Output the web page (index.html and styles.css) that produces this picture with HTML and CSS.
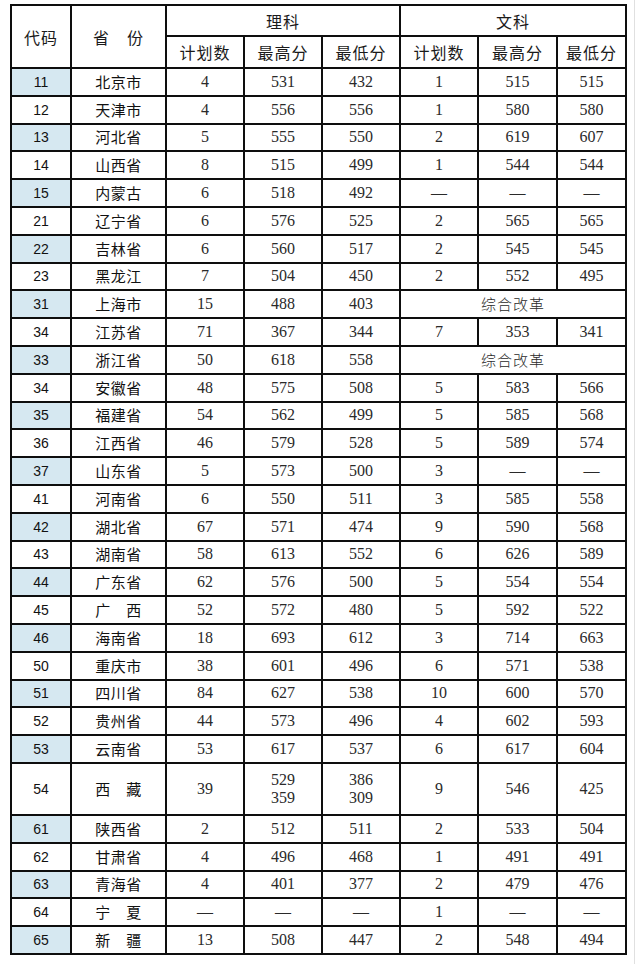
FILE: index.html
```html
<!DOCTYPE html>
<html lang="zh">
<head>
<meta charset="utf-8">
<title>录取分数</title>
<link rel="stylesheet" href="styles.css">
</head>
<body>
<div class="page">
<table class="score">
<colgroup>
<col class="c-code"><col class="c-prov"><col class="c-n"><col class="c-n"><col class="c-n"><col class="c-n"><col class="c-n2"><col class="c-last">
</colgroup>
<thead>
<tr class="h1">
<th rowspan="2">代码</th><th rowspan="2">省　份</th><th colspan="3">理科</th><th colspan="3">文科</th>
</tr>
<tr class="h2">
<th>计划数</th><th>最高分</th><th>最低分</th><th>计划数</th><th>最高分</th><th>最低分</th>
</tr>
</thead>
<tbody>
<tr><td class="code blue">11</td><td class="prov">北京市</td><td>4</td><td>531</td><td>432</td><td>1</td><td>515</td><td>515</td></tr>
<tr><td class="code">12</td><td class="prov">天津市</td><td>4</td><td>556</td><td>556</td><td>1</td><td>580</td><td>580</td></tr>
<tr><td class="code blue">13</td><td class="prov">河北省</td><td>5</td><td>555</td><td>550</td><td>2</td><td>619</td><td>607</td></tr>
<tr><td class="code">14</td><td class="prov">山西省</td><td>8</td><td>515</td><td>499</td><td>1</td><td>544</td><td>544</td></tr>
<tr><td class="code blue">15</td><td class="prov">内蒙古</td><td>6</td><td>518</td><td>492</td><td>—</td><td>—</td><td>—</td></tr>
<tr><td class="code">21</td><td class="prov">辽宁省</td><td>6</td><td>576</td><td>525</td><td>2</td><td>565</td><td>565</td></tr>
<tr><td class="code blue">22</td><td class="prov">吉林省</td><td>6</td><td>560</td><td>517</td><td>2</td><td>545</td><td>545</td></tr>
<tr><td class="code">23</td><td class="prov">黑龙江</td><td>7</td><td>504</td><td>450</td><td>2</td><td>552</td><td>495</td></tr>
<tr><td class="code blue">31</td><td class="prov">上海市</td><td>15</td><td>488</td><td>403</td><td colspan="3" class="reform">综合改革</td></tr>
<tr><td class="code">34</td><td class="prov">江苏省</td><td>71</td><td>367</td><td>344</td><td>7</td><td>353</td><td>341</td></tr>
<tr><td class="code blue">33</td><td class="prov">浙江省</td><td>50</td><td>618</td><td>558</td><td colspan="3" class="reform">综合改革</td></tr>
<tr><td class="code">34</td><td class="prov">安徽省</td><td>48</td><td>575</td><td>508</td><td>5</td><td>583</td><td>566</td></tr>
<tr><td class="code blue">35</td><td class="prov">福建省</td><td>54</td><td>562</td><td>499</td><td>5</td><td>585</td><td>568</td></tr>
<tr><td class="code">36</td><td class="prov">江西省</td><td>46</td><td>579</td><td>528</td><td>5</td><td>589</td><td>574</td></tr>
<tr><td class="code blue">37</td><td class="prov">山东省</td><td>5</td><td>573</td><td>500</td><td>3</td><td>—</td><td>—</td></tr>
<tr><td class="code">41</td><td class="prov">河南省</td><td>6</td><td>550</td><td>511</td><td>3</td><td>585</td><td>558</td></tr>
<tr><td class="code blue">42</td><td class="prov">湖北省</td><td>67</td><td>571</td><td>474</td><td>9</td><td>590</td><td>568</td></tr>
<tr><td class="code">43</td><td class="prov">湖南省</td><td>58</td><td>613</td><td>552</td><td>6</td><td>626</td><td>589</td></tr>
<tr><td class="code blue">44</td><td class="prov">广东省</td><td>62</td><td>576</td><td>500</td><td>5</td><td>554</td><td>554</td></tr>
<tr><td class="code">45</td><td class="prov">广　西</td><td>52</td><td>572</td><td>480</td><td>5</td><td>592</td><td>522</td></tr>
<tr><td class="code blue">46</td><td class="prov">海南省</td><td>18</td><td>693</td><td>612</td><td>3</td><td>714</td><td>663</td></tr>
<tr><td class="code">50</td><td class="prov">重庆市</td><td>38</td><td>601</td><td>496</td><td>6</td><td>571</td><td>538</td></tr>
<tr><td class="code blue">51</td><td class="prov">四川省</td><td>84</td><td>627</td><td>538</td><td>10</td><td>600</td><td>570</td></tr>
<tr><td class="code">52</td><td class="prov">贵州省</td><td>44</td><td>573</td><td>496</td><td>4</td><td>602</td><td>593</td></tr>
<tr><td class="code blue">53</td><td class="prov">云南省</td><td>53</td><td>617</td><td>537</td><td>6</td><td>617</td><td>604</td></tr>
<tr class="tall"><td class="code">54</td><td class="prov">西　藏</td><td>39</td><td class="two">529<br>359</td><td class="two">386<br>309</td><td>9</td><td>546</td><td>425</td></tr>
<tr><td class="code blue">61</td><td class="prov">陕西省</td><td>2</td><td>512</td><td>511</td><td>2</td><td>533</td><td>504</td></tr>
<tr><td class="code">62</td><td class="prov">甘肃省</td><td>4</td><td>496</td><td>468</td><td>1</td><td>491</td><td>491</td></tr>
<tr><td class="code blue">63</td><td class="prov">青海省</td><td>4</td><td>401</td><td>377</td><td>2</td><td>479</td><td>476</td></tr>
<tr><td class="code">64</td><td class="prov">宁　夏</td><td>—</td><td>—</td><td>—</td><td>1</td><td>—</td><td>—</td></tr>
<tr><td class="code blue">65</td><td class="prov">新　疆</td><td>13</td><td>508</td><td>447</td><td>2</td><td>548</td><td>494</td></tr>
</tbody>
</table>
</div>
</body>
</html>
```
FILE: styles.css
```css
html, body {
  margin: 0;
  padding: 0;
  background: #ffffff;
}
.page {
  width: 635px;
  height: 964px;
  border-right: 1px solid #e0e0e0;
  box-sizing: border-box;
  padding-top: 4px;
  padding-left: 10px;
  overflow: hidden;
}
.score {
  border-collapse: collapse;
  table-layout: fixed;
  width: 617px;
  border: 2px solid #0e0e0e;
}
.c-code { width: 60px; }
.c-prov { width: 95px; }
.c-n { width: 78px; }
.c-n2 { width: 79px; }
.c-last { width: 69px; }
.score th, .score td {
  border: 2px solid #0e0e0e;
  padding: 0;
  text-align: center;
  vertical-align: middle;
}
.score th {
  font-family: "Noto Sans CJK SC", "Noto Sans", sans-serif;
  font-weight: 400;
  font-size: 16px;
  color: #1a1a1a;
  letter-spacing: 1px;
  line-height: 18px;
}
.h1 { height: 31px; }
.h2 { height: 32px; }
.score td {
  font-family: "Liberation Serif", "Noto Sans CJK SC", serif;
  font-size: 16px;
  color: #2a2a2a;
  line-height: 18px;
}
.score tbody tr { height: 27.8px; }
.score tbody tr.tall { height: 52px; }
.score td.code {
  font-family: "Liberation Sans", Arial, sans-serif;
  font-size: 14px;
  color: #111111;
}
.score td.blue { background: #d6e8f1; }
.score td.prov {
  font-family: "Noto Sans CJK SC", "Noto Sans", sans-serif;
  font-size: 15px;
  color: #111111;
  letter-spacing: 0.5px;
}
.score td.reform {
  font-family: "Noto Sans CJK SC", sans-serif;
  font-size: 15px;
  font-weight: 300;
  color: #2a2a2a;
  letter-spacing: 1px;
}
```
